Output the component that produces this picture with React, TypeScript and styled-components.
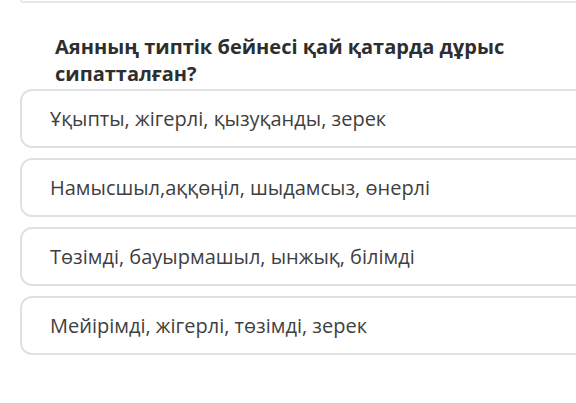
import React from "react";
import styled, { createGlobalStyle } from "styled-components";

const GlobalStyle = createGlobalStyle`
  html, body {
    margin: 0;
    padding: 0;
    background: #ffffff;
    font-family: "Open Sans", "Noto Sans", sans-serif;
  }
`;

const Page = styled.div`
  width: 576px;
  height: 403px;
  overflow: hidden;
  background: #fff;
`;

const PrevCard = styled.div`
  margin-left: 20px;
  margin-right: -20px;
  height: 1px;
  border: 2px solid #e6e9ec;
  border-top: none;
  border-radius: 0 0 10px 10px;
`;

const Question = styled.div`
  padding: 30px 0 0 55px;
  width: 480px;
  font-size: 20px;
  font-weight: 700;
  line-height: 27px;
  color: #2e2e2e;
`;

const Options = styled.div`
  display: flex;
  flex-direction: column;
  gap: 10px;
  margin: 2px -30px 0 20px;
`;

const Option = styled.div`
  height: 55px;
  border: 2px solid #dfe2e5;
  border-radius: 12px;
  display: flex;
  align-items: center;
  padding-left: 28px;
  font-size: 20px;
  color: #3f3f3f;
  background: #fff;
`;

const options = [
  "Ұқыпты, жігерлі, қызуқанды, зерек",
  "Намысшыл,аққөңіл, шыдамсыз, өнерлі",
  "Төзімді, бауырмашыл, ынжық, білімді",
  "Мейірімді, жігерлі, төзімді, зерек",
];

export default function App() {
  return (
    <Page>
      <GlobalStyle />
      <PrevCard />
      <Question>Аянның типтік бейнесі қай қатарда дұрыс сипатталған?</Question>
      <Options>
        {options.map((o) => (
          <Option key={o}>{o}</Option>
        ))}
      </Options>
    </Page>
  );
}
